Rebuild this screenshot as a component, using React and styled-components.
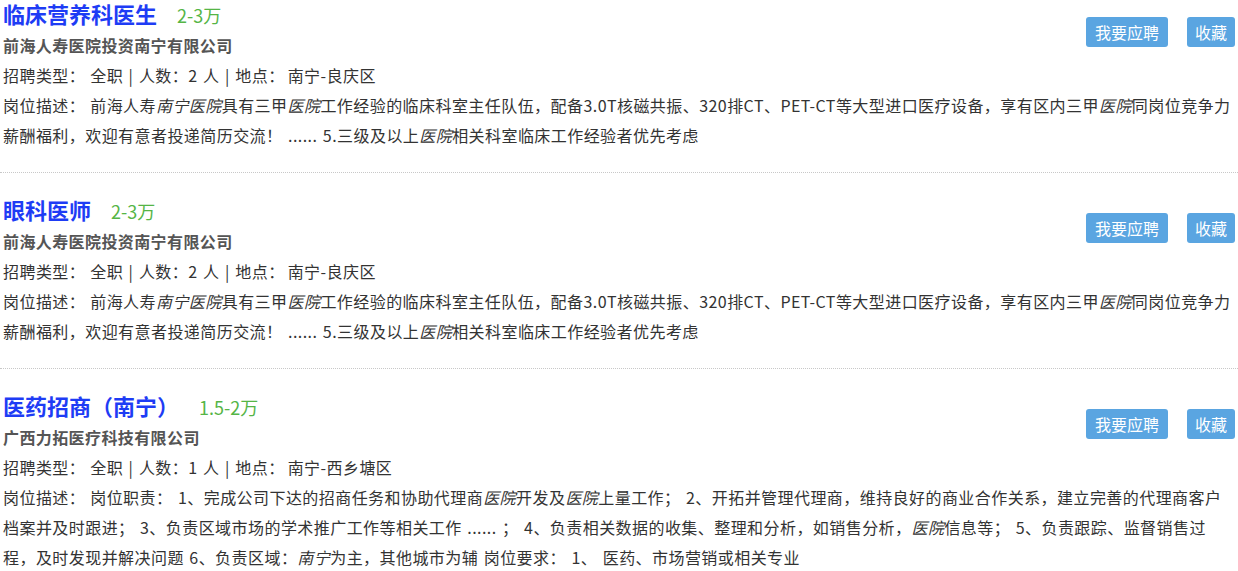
import React from 'react';
import styled, { createGlobalStyle } from 'styled-components';

const GlobalStyle = createGlobalStyle`
  body {
    margin: 0;
    background: #fff;
    font-family: "Noto Sans CJK SC", "Noto Sans", sans-serif;
  }
`;

const jobs = [
  {
    title: '临床营养科医生',
    salary: '2-3万',
    company: '前海人寿医院投资南宁有限公司',
    count: 2,
    place: '南宁-良庆区',
    desc: (
      <>
        前海人寿<em>南宁医院</em>具有三甲<em>医院</em>工作经验的临床科室主任队伍，配备3.0T核磁共振、320排CT、PET-CT等大型进口医疗设备，享有区内三甲<em>医院</em>同岗位竞争力薪酬福利，欢迎有意者投递简历交流！ ...... 5.三级及以上<em>医院</em>相关科室临床工作经验者优先考虑
      </>
    ),
  },
  {
    title: '眼科医师',
    salary: '2-3万',
    company: '前海人寿医院投资南宁有限公司',
    count: 2,
    place: '南宁-良庆区',
    desc: (
      <>
        前海人寿<em>南宁医院</em>具有三甲<em>医院</em>工作经验的临床科室主任队伍，配备3.0T核磁共振、320排CT、PET-CT等大型进口医疗设备，享有区内三甲<em>医院</em>同岗位竞争力薪酬福利，欢迎有意者投递简历交流！ ...... 5.三级及以上<em>医院</em>相关科室临床工作经验者优先考虑
      </>
    ),
  },
  {
    title: '医药招商（南宁）',
    salary: '1.5-2万',
    company: '广西力拓医疗科技有限公司',
    count: 1,
    place: '南宁-西乡塘区',
    desc: (
      <>
        岗位职责： 1、完成公司下达的招商任务和协助代理商<em>医院</em>开发及<em>医院</em>上量工作； 2、开拓并管理代理商，维持良好的商业合作关系，建立完善的代理商客户档案并及时跟进； 3、负责区域市场的学术推广工作等相关工作 ...... ； 4、负责相关数据的收集、整理和分析，如销售分析，<em>医院</em>信息等； 5、负责跟踪、监督销售过程，及时发现并解决问题 6、负责区域：<em>南宁</em>为主，其他城市为辅 岗位要求： 1、 医药、市场营销或相关专业
      </>
    ),
  },
];

const List = styled.div`
  padding: 0 3px;
`;

const Item = styled.div`
  padding: 23px 3px 22px;
  margin: 0 -3px;
  border-bottom: 1px dotted #c8c8c8;
  color: #333;
  font-size: 16px;

  &:first-child {
    padding-top: 0;
  }
`;

const Actions = styled.div`
  float: right;
  display: flex;
  gap: 19px;
  margin-top: 17px;
`;

const Button = styled.button`
  height: 30px;
  padding: 0 ${p => (p.$wide ? 9 : 8)}px;
  border: none;
  border-radius: 3px;
  background: #5aa5e1;
  color: #fff;
  font-family: inherit;
  font-size: 16px;
  line-height: 30px;
  cursor: pointer;
`;

const TitleRow = styled.div`
  display: flex;
  align-items: baseline;
  gap: 20px;
  height: 26px;
  line-height: 26px;
  margin-bottom: 4px;
`;

const Title = styled.a`
  font-size: 22px;
  font-weight: bold;
  color: #1e3cf5;
  text-decoration: none;
`;

const Salary = styled.span`
  font-size: 18px;
  color: #55b546;
`;

const Company = styled.div`
  font-size: 16px;
  font-weight: bold;
  color: #555;
  line-height: 30px;
  letter-spacing: 0.4px;
`;

const Line = styled.div`
  line-height: 30px;
  letter-spacing: 0.44px;
  word-spacing: 1.5px;

  em {
    font-style: italic;
  }
`;

const Gap = styled.span`
  display: inline-block;
  width: ${p => p.$w}px;
`;

export default function App() {
  return (
    <>
      <GlobalStyle />
      <List>
        {jobs.map(job => (
          <Item key={job.title}>
            <Actions>
              <Button $wide>我要应聘</Button>
              <Button>收藏</Button>
            </Actions>
            <TitleRow>
              <Title href="#">{job.title}</Title>
              <Salary>{job.salary}</Salary>
            </TitleRow>
            <Company>{job.company}</Company>
            <Line>
              招聘类型：<Gap $w={5} />全职 | 人数：{job.count} 人 | 地点：<Gap $w={3} />{job.place}
            </Line>
            <Line>
              岗位描述：<Gap $w={5} />{job.desc}
            </Line>
          </Item>
        ))}
      </List>
    </>
  );
}
